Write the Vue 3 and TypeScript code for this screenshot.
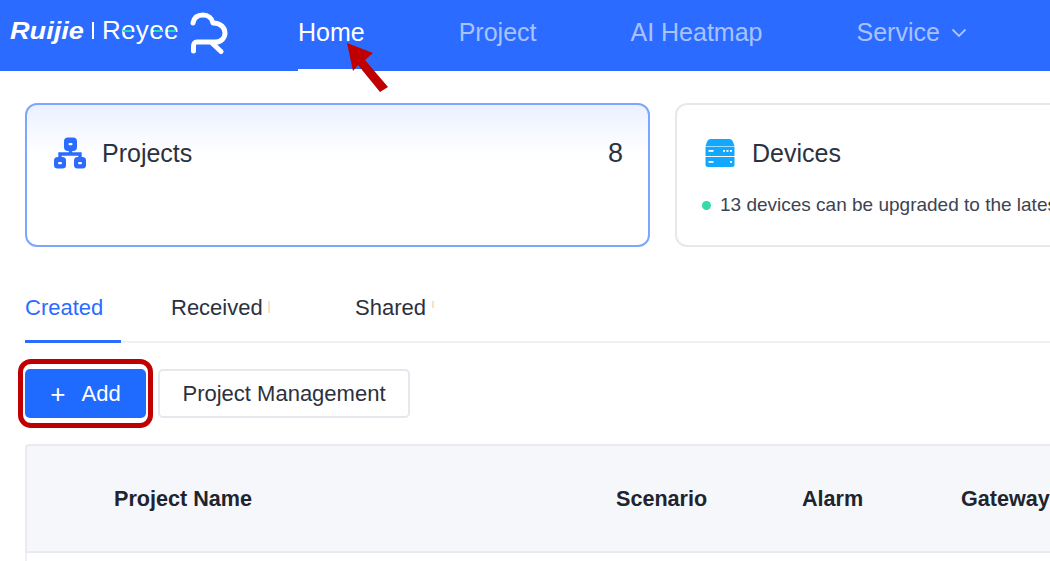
<script setup lang="ts">
const navItems = [
  { label: 'Home', active: true },
  { label: 'Project', active: false },
  { label: 'AI Heatmap', active: false },
]
const columns = ['Scenario', 'Alarm', 'Gateway']
</script>

<template>
  <div class="page">
    <header class="topbar">
      <div class="logo">
        <span class="ruijie-box"><span class="ruijie">Ruijie</span></span>
        <span class="divider"></span>
        <span class="reyee">
          Reyee
          <i class="bar bar-1"></i>
          <i class="bar bar-2"></i>
          <i class="bar bar-3"></i>
        </span>
        <svg class="logo-mark" viewBox="0 0 38 42" width="38" height="42" fill="none" stroke="#fff" stroke-width="5" stroke-linecap="round" stroke-linejoin="round">
          <path d="M3 11 C4 5 8 3 13 3 C18 3 22 6 23 11 C31 11 35 16 35 21 C35 26 31 30 26 30 L7 30 C4 30 3.500 32 3.500 35 L3.500 39" />
          <path d="M22 31 L31 39.500" />
        </svg>
      </div>
      <nav class="nav">
        <a v-for="item in navItems" :key="item.label" class="nav-item" :class="{ active: item.active }">{{ item.label }}</a>
        <a class="nav-item">
          Service
          <svg class="chev" viewBox="0 0 16 10" width="16" height="10" fill="none" stroke="currentColor" stroke-width="1.800">
            <path d="M1.500 1.500 L8 8 L14.500 1.500" />
          </svg>
        </a>
      </nav>
    </header>

    <main class="content">
      <section class="cards">
        <div class="card card-active">
          <div class="card-head">
            <svg class="icon-projects" viewBox="0 0 32 32" width="32" height="32">
              <path d="M16.500 12 V18 M6 22 V17 H26 V22" fill="none" stroke="#2b6cff" stroke-width="3.400" />
              <g fill="#2b6cff">
                <rect x="10" y="0.500" width="13" height="13.500" rx="4" />
                <rect x="0" y="20" width="12" height="11.500" rx="3.500" />
                <rect x="20" y="20" width="12" height="11.500" rx="3.500" />
              </g>
              <g fill="#fff">
                <rect x="14.500" y="6" width="4" height="2.200" rx="1" />
                <rect x="4" y="25" width="4" height="2.200" rx="1" />
                <rect x="24" y="25" width="4" height="2.200" rx="1" />
              </g>
            </svg>
            <span class="card-title">Projects</span>
            <span class="count">8</span>
          </div>
        </div>
        <div class="card card-plain">
          <div class="card-head devices-head">
            <svg class="icon-devices" viewBox="0 0 30 30" width="30" height="30">
              <path d="M6 1 H24 Q27 1 28 4 L29.500 8 H0.500 L2 4 Q3 1 6 1 Z" fill="#12a8ff" />
              <rect x="0.500" y="8.600" width="29" height="9.400" fill="#12a8ff" />
              <path d="M0.500 19 H29.500 V26.500 Q29.500 29 27 29 H3 Q0.500 29 0.500 26.500 Z" fill="#12a8ff" />
              <g fill="#fff">
                <rect x="3.500" y="12" width="5" height="1.800" />
                <rect x="18" y="12" width="2" height="1.800" />
                <rect x="21.500" y="12" width="2" height="1.800" />
                <rect x="25" y="12" width="2" height="1.800" />
                <rect x="3.500" y="23" width="5" height="1.800" />
                <rect x="25" y="23" width="2" height="1.800" />
              </g>
            </svg>
            <span class="card-title">Devices</span>
          </div>
          <div class="upgrade">
            <span class="dot"></span>
            <span>13 devices can be upgraded to the latest version</span>
          </div>
        </div>
      </section>

      <section class="tabs">
        <div class="tab tab-active">Created</div>
        <div class="tab tab-received">Received<i class="clip-mark mark-received"></i></div>
        <div class="tab tab-shared">Shared<i class="clip-mark mark-shared"></i></div>
      </section>

      <section class="actions">
        <div class="highlight">
          <button class="btn btn-primary"><span class="plus">+</span>Add</button>
        </div>
        <button class="btn btn-default">Project Management</button>
      </section>

      <section class="table-head">
        <div class="col-name">Project Name</div>
        <div v-for="col in columns" :key="col" class="col" :class="'col-' + col.toLowerCase()">{{ col }}</div>
      </section>
      <div class="table-body"></div>
    </main>

    <svg class="arrow" viewBox="0 0 44 50" width="44" height="50">
      <path d="M0 0 L26 10 L18 17 L41 44 L33 49 L11 22 L6 28 Z" fill="#c00000" />
    </svg>
  </div>
</template>

<style>
html, body { margin: 0; background: #fff; overflow: hidden; }
</style>

<style scoped>
.page {
  position: relative;
  width: 1050px;
  height: 561px;
  overflow: hidden;
  background: #fff;
  font-family: "Liberation Sans", Arial, sans-serif;
  color: #2b3140;
}
.topbar {
  display: flex;
  height: 71px;
  background: #2b6bff;
  color: #fff;
}
.logo {
  display: flex;
  align-items: center;
  width: 298px;
  flex: none;
  padding: 0 0 10px 10px;
  box-sizing: border-box;
}
.ruijie-box { width: 80px; flex: none; }
.ruijie {
  display: inline-block;
  font: italic 700 24px "Liberation Sans", sans-serif;
  transform: scaleX(1.130);
  transform-origin: left center;
}
.divider {
  width: 2px;
  height: 17px;
  background: #fff;
  margin: 0 8px 0 2px;
  flex: none;
}
.reyee {
  position: relative;
  font: 400 26px "Liberation Sans", sans-serif;
  letter-spacing: 0.300px;
  width: 88px;
  flex: none;
}
.bar {
  position: absolute;
  top: 15px;
  height: 2px;
  background: #20dcb2;
}
.bar-1 { left: 21px; width: 9px; }
.bar-2 { left: 52px; width: 8px; }
.bar-3 { left: 66px; width: 8px; }
.logo-mark { flex: none; margin-top: 4px; }
.nav { display: flex; gap: 94px; }
.nav-item {
  display: flex;
  align-items: center;
  gap: 11px;
  height: 71px;
  box-sizing: border-box;
  padding-bottom: 6px;
  font-size: 25px;
  color: rgba(255, 255, 255, 0.6);
  white-space: nowrap;
}
.nav-item.active { color: #fff; box-shadow: inset 0 -2px 0 #fff; }
.chev { margin-top: 1px; }
.content { padding: 32px 0 0 25px; }
.cards { display: flex; gap: 25px; }
.card {
  height: 144px;
  box-sizing: border-box;
  border-radius: 12px;
  flex: none;
}
.card-active {
  width: 625px;
  border: 2px solid #7da6ff;
  background: linear-gradient(#eaf1ff 0, #fff 36%);
}
.card-plain {
  width: 640px;
  border: 2px solid #e6e8ee;
  background: #fff;
}
.card-head {
  display: flex;
  align-items: center;
  gap: 16px;
  padding: 32px 25px 0 27px;
}
.devices-head { padding-left: 28px; gap: 17px; }
.card-title { font-size: 25px; color: #2b3140; line-height: 32px; }
.count { margin-left: auto; font-size: 27px; color: #2b3140; }
.upgrade {
  display: flex;
  align-items: center;
  gap: 9px;
  padding: 25px 0 0 25px;
  font-size: 19px;
  color: #3c4352;
  white-space: nowrap;
}
.dot {
  width: 9px;
  height: 9px;
  border-radius: 50%;
  background: #36d9a8;
  flex: none;
}
.tabs {
  display: flex;
  height: 96px;
  box-sizing: border-box;
  border-bottom: 2px solid #f0f1f4;
}
.tab {
  position: relative;
  height: 96px;
  box-sizing: border-box;
  padding-top: 47px;
  font-size: 22px;
  line-height: 28px;
  color: #2b3140;
}
.tab-active {
  width: 96px;
  color: #2b6cff;
  border-bottom: 3px solid #2b6cff;
}
.tab-received { margin-left: 50px; width: 184px; }
.tab-shared { width: 90px; }
.clip-mark {
  position: absolute;
  top: 54px;
  width: 2px;
  height: 12px;
  background: #f7e3bd;
}
.mark-received { left: 97px; }
.mark-shared { left: 77px; height: 7px; }
.actions {
  display: flex;
  align-items: center;
  gap: 12px;
  padding-top: 26px;
}
.highlight {
  margin: -10px -7px -10px -7px;
  padding: 5px 2px;
  border: 5px solid #c00000;
  border-radius: 13px;
  display: flex;
}
.btn {
  height: 49px;
  box-sizing: border-box;
  border-radius: 5px;
  font: 400 22px "Liberation Sans", sans-serif;
  display: flex;
  align-items: center;
  justify-content: center;
  padding: 0;
}
.btn-primary {
  width: 121px;
  background: #1f6bff;
  color: #fff;
  border: none;
}
.plus { font-size: 26px; font-weight: 400; margin-right: 16px; line-height: 1; }
.btn-default {
  width: 252px;
  background: #fff;
  color: #2b3140;
  border: 2px solid #e6e8ee;
}
.table-head {
  display: flex;
  align-items: center;
  height: 109px;
  margin-top: 26px;
  box-sizing: border-box;
  background: #f6f7fb;
  border: 2px solid #e9ebf1;
  border-right: none;
  border-radius: 4px 0 0 0;
  font-size: 21.600px;
  font-weight: 700;
  color: #20242f;
  white-space: nowrap;
}
.table-body { height: 20px; border-left: 2px solid #eff0f4; }
.col-name { width: 500px; padding-left: 87px; box-sizing: border-box; flex: none; }
.col-scenario { width: 186px; margin-left: 89px; flex: none; }
.col-alarm { width: 159px; flex: none; }
.col-gateway { flex: none; }
.arrow { position: absolute; left: 347px; top: 43px; }
</style>
